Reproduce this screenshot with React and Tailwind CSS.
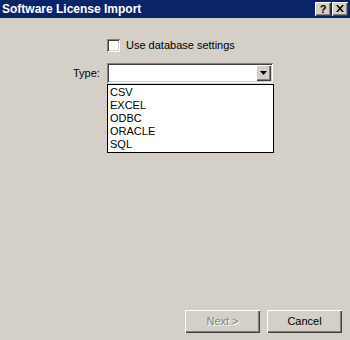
import React from 'react';

const raised = 'shadow-[inset_1px_1px_0_#ffffff,inset_-1px_-1px_0_#404040,inset_-2px_-2px_0_#808080]';
const sunken = 'shadow-[inset_1px_1px_0_#808080,inset_-1px_-1px_0_#ffffff,inset_2px_2px_0_#404040,inset_-2px_-2px_0_#d4d0c8]';

const options = ['CSV', 'EXCEL', 'ODBC', 'ORACLE', 'SQL'];

export default function App() {
  return (
    <div className="w-[350px] h-[340px] bg-[#d4d0c8] flex flex-col font-['Liberation_Sans',Arial,sans-serif] text-[11px] text-black">
      {/* title bar */}
      <div className="h-[18px] bg-[#0a246a] flex items-center justify-between pl-[2px] pr-[2px]">
        <span className="text-white font-bold text-[12px] leading-none">Software License Import</span>
        <div className="flex gap-[1px]">
          <div className={`w-[16px] h-[14px] bg-[#d4d0c8] flex items-center justify-center ${raised}`}>
            <span className="font-bold text-[11px] leading-none mt-[1px]">?</span>
          </div>
          <div className={`w-[16px] h-[14px] bg-[#d4d0c8] flex items-center justify-center ${raised}`}>
            <svg width="8" height="7" viewBox="0 0 8 7" className="mt-[-1px]">
              <path d="M0 0h2l2 2.5L6 0h2L5 3.5 8 7H6L4 4.5 2 7H0l3-3.5z" fill="#000" />
            </svg>
          </div>
        </div>
      </div>

      {/* body */}
      <div className="flex-1 flex flex-col pt-[21px]">
        <div className="flex items-center pl-[107px] gap-[6px] h-[13px]">
          <div className={`w-[13px] h-[13px] bg-white ${sunken}`} />
          <span className="leading-none">Use database settings</span>
        </div>

        <div className="flex items-center pl-[73px] mt-[11px]">
          <span className="w-[34px] leading-none">Type:</span>
          <div className={`relative w-[166px] h-[20px] bg-white ${sunken} flex justify-end items-center pr-[2px]`}>
            <div className={`w-[15px] h-[16px] bg-[#d4d0c8] flex items-center justify-center ${raised}`}>
              <svg width="7" height="4" viewBox="0 0 7 4">
                <path d="M0 0h7L3.5 4z" fill="#000" />
              </svg>
            </div>
            <div className="absolute left-0 top-[21px] w-[167px] bg-white border border-black py-[1px] z-10">
              {options.map((o) => (
                <div key={o} className="h-[13px] leading-[13px] pl-[2px]">{o}</div>
              ))}
            </div>
          </div>
        </div>

        <div className="flex-1" />

        <div className="flex justify-end gap-[7px] pr-[8px] pb-[7px]">
          <div className={`w-[75px] h-[23px] flex items-center justify-center ${raised}`}>
            <span className="text-[#808080] [text-shadow:1px_1px_0_#ffffff]">Next &gt;</span>
          </div>
          <div className={`w-[75px] h-[23px] flex items-center justify-center ${raised}`}>
            <span>Cancel</span>
          </div>
        </div>
      </div>
    </div>
  );
}
